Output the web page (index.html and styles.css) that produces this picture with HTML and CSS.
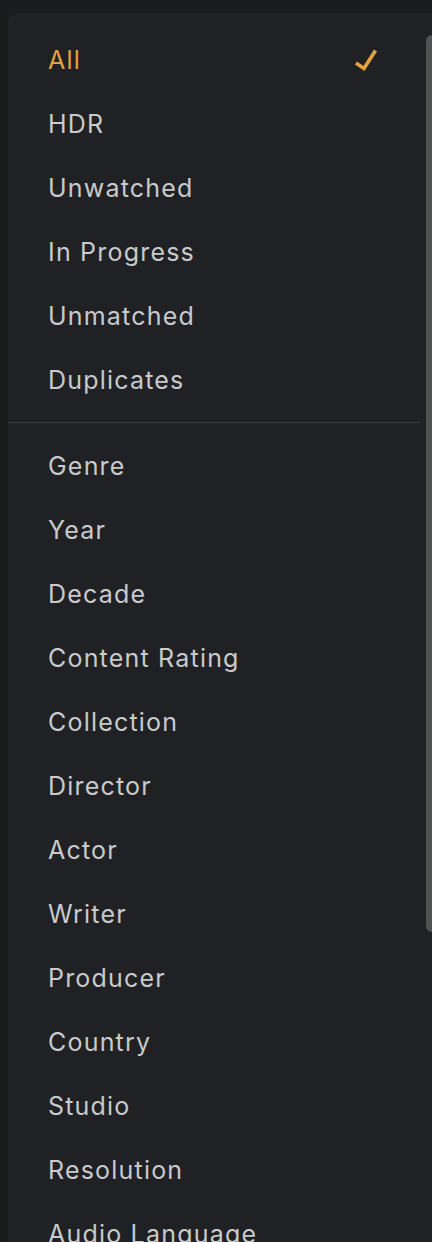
FILE: index.html
```html
<!DOCTYPE html>
<html lang="en">
<head>
  <meta charset="UTF-8" />
  <title>Filter</title>
  <link rel="stylesheet" href="styles.css">
</head>
<body>

  <div class="menu">
    <ul class="group">
      <li class="item selected">
        <span>All</span>
        <svg class="check" width="24" height="24" viewBox="0 0 24 24">
          <path d="M2 15 L10 20.5 L21.5 2.5" fill="none" stroke="currentColor" stroke-width="3.6" />
        </svg>
      </li>
      <li class="item"><span>HDR</span></li>
      <li class="item"><span>Unwatched</span></li>
      <li class="item"><span>In Progress</span></li>
      <li class="item"><span>Unmatched</span></li>
      <li class="item"><span>Duplicates</span></li>
    </ul>

    <hr class="divider">

    <ul class="group">
      <li class="item"><span>Genre</span></li>
      <li class="item"><span>Year</span></li>
      <li class="item"><span>Decade</span></li>
      <li class="item"><span>Content Rating</span></li>
      <li class="item"><span>Collection</span></li>
      <li class="item"><span>Director</span></li>
      <li class="item"><span>Actor</span></li>
      <li class="item"><span>Writer</span></li>
      <li class="item"><span>Producer</span></li>
      <li class="item"><span>Country</span></li>
      <li class="item"><span>Studio</span></li>
      <li class="item"><span>Resolution</span></li>
      <li class="item"><span>Audio Language</span></li>
      <li class="item"><span>Subtitle Language</span></li>
    </ul>

    <div class="scrollbar"></div>
  </div>

</body>
</html>
```

FILE: styles.css
```css
html, body {
  height: 100%;
}

body {
  margin: 0;
  font-family: Inter, "Noto Sans", sans-serif;
  background-color: #1b1c1e;
  color: #c9cacb;
  overflow: hidden;
}

.menu {
  position: relative;
  margin: 13px 0 0 8px;
  padding-top: 15px;
  background-color: #202124;
  border-top-left-radius: 8px;
  min-height: 1300px;
}

.group {
  list-style: none;
  margin: 0;
  padding: 0;
}

.item {
  height: 64px;
  display: flex;
  align-items: center;
  justify-content: space-between;
  padding: 0 54px 0 40px;
  font-size: 25px;
  letter-spacing: 1.2px;
}

.item.selected {
  color: #e6a23a;
}

.check {
  display: block;
  color: #e6a23a;
}

.divider {
  margin: 10px 12px 11px 0;
  border: none;
  height: 1px;
  background-color: #3a3b3d;
}

.scrollbar {
  position: absolute;
  top: 22px;
  right: 0;
  width: 6px;
  height: 897px;
  border-radius: 6px 0 0 6px;
  background-color: #505254;
}
```
